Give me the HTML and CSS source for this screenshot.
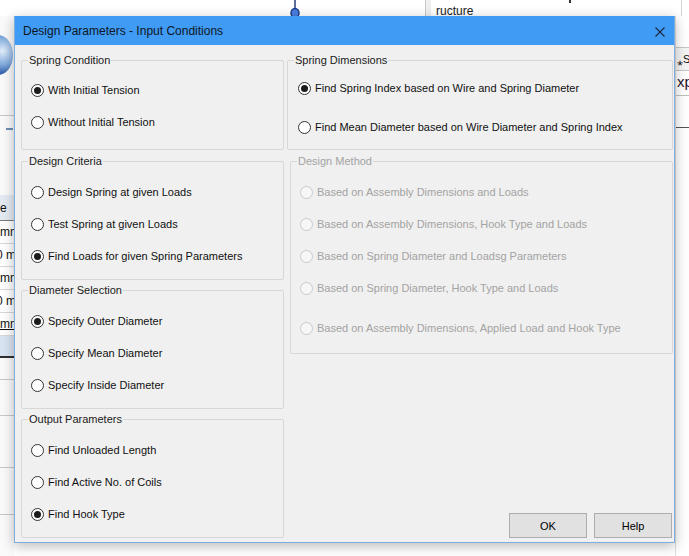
FILE: index.html
```html
<!DOCTYPE html>
<html lang="en">
<head>
  <meta charset="UTF-8" />
  <meta name="viewport" content="width=device-width, initial-scale=1.0" />
  <title>Design Parameters - Input Conditions</title>
  <link rel="stylesheet" href="styles.css">
</head>
<body>

<!-- main window behind the dialog -->
<div class="app">
  <div class="app-top">
    <svg class="app-pin" width="12" height="16" viewBox="0 0 12 16">
      <line x1="6" y1="0" x2="6" y2="8" stroke="#2a3f7a" stroke-width="1.5" />
      <ellipse cx="6" cy="13" rx="4" ry="4.5" fill="#4a7ee0" stroke="#1d3a8a" stroke-width="1.5" />
    </svg>
    <span class="app-mark"></span>
    <span class="app-divider"></span>
    <span class="app-tab">ructure</span>
    <span class="app-split"></span>
  </div>

  <div class="app-left">
    <span class="app-logo"></span>
    <span class="app-rule"></span>
    <span class="app-dash"></span>
    <div class="app-table">
      <div class="cell head">e</div>
      <div class="cell">mm</div>
      <div class="cell shift">0 mm</div>
      <div class="cell">mm</div>
      <div class="cell shift">0 mm</div>
      <div class="cell link">mm</div>
      <div class="cell band"></div>
    </div>
    <span class="app-rule r1"></span>
    <span class="app-rule r2"></span>
    <span class="app-rule r3"></span>
    <span class="app-rule r4"></span>
  </div>

  <div class="app-mid"></div>

  <div class="app-right">
    <div class="pane-row small">&#8270;S</div>
    <div class="pane-row big">xpl</div>
    <span class="pane-rule"></span>
  </div>
</div>

<div class="dialog">
  <div class="titlebar">
    <span class="title">Design Parameters - Input Conditions</span>
    <svg class="close" width="10" height="10" viewBox="0 0 10 10">
      <path d="M0.5 0.5 L9.5 9.5 M9.5 0.5 L0.5 9.5" stroke="#1b2a40" stroke-width="1.1" fill="none" />
    </svg>
  </div>

  <form class="dialog-body" id="inputForm">
    <div class="col col-left">
      <div class="group g-condition">
        <span class="group-title">Spring Condition</span>
        <label class="opt"><input type="radio" name="condition" checked> With Initial Tension</label>
        <label class="opt"><input type="radio" name="condition"> Without Initial Tension</label>
      </div>

      <div class="group g-criteria">
        <span class="group-title">Design Criteria</span>
        <label class="opt"><input type="radio" name="criteria"> Design Spring at given Loads</label>
        <label class="opt"><input type="radio" name="criteria"> Test Spring at given Loads</label>
        <label class="opt"><input type="radio" name="criteria" checked> Find Loads for given Spring Parameters</label>
      </div>

      <div class="group g-diameter">
        <span class="group-title">Diameter Selection</span>
        <label class="opt"><input type="radio" name="diameter" checked> Specify Outer Diameter</label>
        <label class="opt"><input type="radio" name="diameter"> Specify Mean Diameter</label>
        <label class="opt"><input type="radio" name="diameter"> Specify Inside Diameter</label>
      </div>

      <div class="group g-output">
        <span class="group-title">Output Parameters</span>
        <label class="opt"><input type="radio" name="output"> Find Unloaded Length</label>
        <label class="opt"><input type="radio" name="output"> Find Active No. of Coils</label>
        <label class="opt"><input type="radio" name="output" checked> Find Hook Type</label>
      </div>
    </div>

    <div class="col col-right">
      <div class="group g-dimensions">
        <span class="group-title">Spring Dimensions</span>
        <label class="opt"><input type="radio" name="dimensions" checked> Find Spring Index based on Wire and Spring Diameter</label>
        <label class="opt"><input type="radio" name="dimensions"> Find Mean Diameter based on Wire Diameter and Spring Index</label>
      </div>

      <div class="group g-method disabled">
        <span class="group-title">Design Method</span>
        <label class="opt"><input type="radio" name="method" disabled> Based on Assembly Dimensions and Loads</label>
        <label class="opt"><input type="radio" name="method" disabled> Based on Assembly Dimensions, Hook Type and Loads</label>
        <label class="opt"><input type="radio" name="method" disabled> Based on Spring Diameter and Loadsg Parameters</label>
        <label class="opt"><input type="radio" name="method" disabled> Based on Spring Diameter, Hook Type and Loads</label>
        <label class="opt far"><input type="radio" name="method" disabled> Based on Assembly Dimensions, Applied Load and Hook Type</label>
      </div>

      <div class="buttons">
        <button type="submit">OK</button>
        <button type="button">Help</button>
      </div>
    </div>
  </form>
</div>

</body>
</html>
```

FILE: styles.css
```css
* {
  box-sizing: border-box;
}
html,
body {
  margin: 0;
}
body {
  width: 689px;
  height: 556px;
  overflow: hidden;
  position: relative;
  background: #fff;
  font-family: "Liberation Sans", Arial, sans-serif;
  font-size: 11px;
  color: #000;
}

/* ---- main window ---- */
.app {
  display: grid;
  grid-template-columns: 14px 661px 14px;
  grid-template-rows: 16px 540px;
  height: 556px;
}
.app-top {
  grid-column: 1 / -1;
  display: flex;
  align-items: flex-start;
  background: #fff;
}
.app-pin {
  margin-left: 289px;
}
.app-mark {
  width: 2px;
  height: 3px;
  margin-left: 268px;
  background: #333;
}
.app-divider {
  width: 6px;
  height: 16px;
  margin-left: -146px;
  border-left: 1px solid #c9c9c9;
  background: #efefef;
}
.app-tab {
  margin-left: 5px;
  padding-top: 5px;
  font-size: 12px;
  line-height: 12px;
  color: #222;
}
.app-split {
  width: 1px;
  height: 16px;
  margin-left: auto;
  margin-right: 7px;
  background: #d4d4d4;
}

.app-left {
  display: flex;
  flex-direction: column;
  overflow: hidden;
  background: #fafafa;
}
.app-logo {
  width: 30px;
  height: 40px;
  margin: 19px 0 0 -17px;
  border-radius: 50%;
  background: radial-gradient(circle at 65% 40%, #e3eefa, #7fa9dc 45%, #2f5ca8 75%, #1b3a78);
}
.app-rule {
  height: 1px;
  margin-top: 40px;
  background: #c8c8c8;
}
.app-dash {
  width: 7px;
  height: 2px;
  margin: 12px 0 0 6px;
  background: #6f8fb8;
}
.app-table {
  margin-top: 65px;
  background: #fff;
}
.cell {
  height: 23px;
  line-height: 22px;
  font-size: 12px;
  white-space: nowrap;
  border-bottom: 1px solid #d8d8d8;
  color: #111;
}
.cell.head {
  height: 26px;
  line-height: 26px;
  background: #e4eaf2;
  border-bottom: 1px solid #7a7a7a;
}
.cell.shift {
  text-indent: -4px;
}
.cell.link {
  text-decoration: underline;
}
.cell.band {
  height: 22px;
  background: #d9e4f2;
  border-bottom: 2px solid #303030;
}
.app-rule.r1 {
  margin-top: 21px;
}
.app-rule.r2 {
  margin-top: 35px;
}
.app-rule.r3 {
  margin-top: 51px;
}
.app-rule.r4 {
  margin-top: 46px;
}

.app-right {
  display: flex;
  flex-direction: column;
  background: #fff;
  border-left: 1px solid #e0e0e0;
  padding-top: 31px;
}
.pane-row {
  white-space: nowrap;
  border-top: 1px solid #c6c6c6;
  color: #111;
  padding-left: 1px;
}
.pane-row.small {
  height: 23px;
  line-height: 22px;
  font-size: 11px;
  background: #f4f4f4;
}
.pane-row.big {
  height: 26px;
  line-height: 22px;
  font-size: 15px;
  color: #2a1630;
  border-bottom: 1px solid #bfbfbf;
}
.pane-rule {
  height: 1px;
  margin-top: 31px;
  background: #555;
}

/* ---- dialog window ---- */
.dialog {
  position: absolute;
  left: 14px;
  top: 16px;
  width: 661px;
  height: 527px;
  display: flex;
  flex-direction: column;
  background: #f0f0f0;
  border: 1px solid #7eaee0;
  border-top-color: #3f9bf4;
  box-shadow: 0 3px 12px rgba(0, 0, 0, 0.28);
}
.titlebar {
  height: 28px;
  display: flex;
  align-items: center;
  justify-content: space-between;
  padding: 0 9px 0 8px;
  background: #3f9bf4;
}
.title {
  font-size: 12px;
  color: #0f1623;
}
.close {
  margin-top: 1px;
}

.dialog-body {
  flex: 1;
  display: flex;
  gap: 3px;
  padding: 15px 1px 4px 6px;
  margin: 0;
}
.col {
  display: flex;
  flex-direction: column;
}
.col-left {
  width: 263px;
}
.col-right {
  flex: 1;
}

.group {
  position: relative;
  display: flex;
  flex-direction: column;
  gap: 16px;
  padding: 22px 0 0 9px;
  border: 1px solid #d7d7d7;
  border-radius: 2px;
}
.group-title {
  position: absolute;
  top: -7px;
  left: 6px;
  padding: 0 1px;
  line-height: 13px;
  background: #f0f0f0;
  color: #1a1a1a;
}
.g-condition {
  height: 90px;
  padding-top: 21px;
}
.g-criteria {
  height: 119px;
  margin-top: 11px;
}
.g-diameter,
.g-output {
  height: 119px;
  margin-top: 10px;
}
.g-dimensions {
  height: 90px;
  gap: 23px;
  padding: 19px 0 0 10px;
}
.g-method {
  height: 193px;
  margin: 11px 0 0 3px;
}

.opt {
  display: flex;
  align-items: center;
  gap: 4px;
  height: 16px;
  white-space: nowrap;
  color: #111;
}
.opt.far {
  margin-top: 8px;
}
.opt input {
  appearance: none;
  -webkit-appearance: none;
  width: 13px;
  height: 13px;
  margin: 0;
  flex: none;
  display: grid;
  place-content: center;
  border: 1px solid #333;
  border-radius: 50%;
  background: #fff;
}
.opt input:checked::before {
  content: "";
  width: 7px;
  height: 7px;
  border-radius: 50%;
  background: #1b1b1b;
}
.disabled .group-title,
.disabled .opt {
  color: #a3a3a3;
}
.opt input:disabled {
  border-color: #c9c9c9;
  background: #f7f7f7;
}

.buttons {
  margin-top: auto;
  display: flex;
  justify-content: flex-end;
  gap: 7px;
  padding-right: 1px;
}
.buttons button {
  width: 78px;
  height: 25px;
  padding: 0;
  font-family: inherit;
  font-size: 11px;
  color: #000;
  background: #e1e1e1;
  border: 1px solid #adadad;
  border-radius: 0;
}
```
